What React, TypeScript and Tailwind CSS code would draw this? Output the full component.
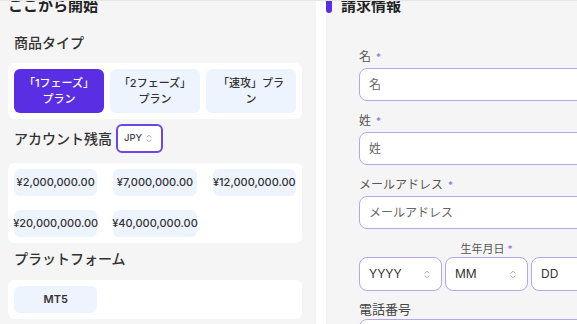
import React from "react";

const FONT = { fontFamily: 'Inter, "Noto Sans CJK JP", "Noto Sans", sans-serif' };

function Chevrons({ className = "" }: { className?: string }) {
  return (
    <svg width="6" height="9" viewBox="0 0 6 9" className={className} fill="none" stroke="#a3a3a3" strokeWidth="1" strokeLinecap="round" strokeLinejoin="round">
      <path d="M1 3.2 L3 1.2 L5 3.2" />
      <path d="M1 5.8 L3 7.8 L5 5.8" />
    </svg>
  );
}

function Label({ text, required = true }: { text: string; required?: boolean }) {
  return (
    <div className="text-[12px] leading-[16px] text-[#555] mb-[3px]">
      {text}
      {required && <span className="ml-[5px] text-[10px] text-[#8c6cf2]">*</span>}
    </div>
  );
}

function TextInput({ placeholder }: { placeholder: string }) {
  return (
    <input
      readOnly
      placeholder={placeholder}
      className="block w-full h-[33px] rounded-[8px] border border-[#b5a7ef] bg-white pl-[9px] text-[12px] text-[#333] placeholder:text-[#666] outline-none"
    />
  );
}

function DateSelect({ text }: { text: string }) {
  return (
    <div className="w-[83px] h-[34px] shrink-0 rounded-[8px] border border-[#b5a7ef] bg-white flex items-center justify-between pl-[9px] pr-[11px] text-[12px] text-[#333]">
      <span>{text}</span>
      <Chevrons />
    </div>
  );
}

export default function App() {
  const plans = [
    { label: "「1フェーズ」プラン", active: true },
    { label: "「2フェーズ」プラン", active: false },
    { label: "「速攻」プラン", active: false },
  ];
  const balances = ["¥2,000,000.00", "¥7,000,000.00", "¥12,000,000.00", "¥20,000,000.00", "¥40,000,000.00"];

  return (
    <div style={FONT} className="w-[577px] h-[324px] overflow-hidden bg-white border-t border-[#e6e6e6] flex gap-[10px]">
      {/* Left column */}
      <div className="w-[316px] shrink-0 h-full bg-[#f5f5f5] pl-2">
        <h2 className="-mt-[6px] text-[15px] leading-[22px] font-bold text-[#222]">ここから開始</h2>

        <div className="mt-[16px] pl-[6px] text-[14px] leading-[20px] font-medium text-[#333]">商品タイプ</div>
        <div className="mt-[10px] w-[294px] rounded-[6px] bg-white p-[6px] grid grid-cols-3 gap-[6px]">
          {plans.map((p) => (
            <div
              key={p.label}
              className={`h-[44px] rounded-[6px] px-[8px] flex items-center justify-center text-center text-[11px] leading-[16px] font-medium ${
                p.active ? "bg-[#5a2ee2] text-white" : "bg-[#eef4fe] text-[#333]"
              }`}
            >
              {p.label}
            </div>
          ))}
        </div>

        <div className="mt-[5px] pl-[6px] flex items-center gap-1">
          <span className="text-[14px] leading-[20px] font-medium text-[#333]">アカウント残高</span>
          <div className="w-[47px] h-[29px] rounded-[6px] border-2 border-[#6a47e6] bg-white flex items-center pl-[6px] gap-[4px]">
            <span className="text-[9.5px] font-medium text-[#444]">JPY</span>
            <Chevrons />
          </div>
        </div>

        <div className="mt-[10px] w-[294px] rounded-[6px] bg-white p-[6px] grid grid-cols-3 gap-x-4 gap-y-[14px]">
          {balances.map((b) => (
            <div key={b} className="h-[27px] rounded-[6px] bg-[#eef4fe] flex items-center justify-center whitespace-nowrap text-[11px] font-medium text-[#333]">
              {b}
            </div>
          ))}
        </div>

        <div className="mt-[6px] pl-[6px] text-[14px] leading-[20px] font-medium text-[#333]">プラットフォーム</div>
        <div className="mt-[11px] w-[294px] rounded-[6px] bg-white p-[6px] grid grid-cols-3 gap-x-4">
          <div className="h-[27px] rounded-[6px] bg-[#eef4fe] flex items-center justify-center text-[11px] font-semibold text-[#333]">MT5</div>
        </div>
      </div>

      {/* Right column */}
      <div className="w-[320px] shrink-0 h-full bg-[#f5f5f5]">
        <div className="-mt-[6px] flex items-start gap-[9px]">
          <div className="w-[6px] h-[18px] rounded-[3px] bg-[#5a2ee2]" />
          <h2 className="text-[15px] leading-[22px] font-bold text-[#222]">請求情報</h2>
        </div>

        <div className="pl-[33px]">
          <div className="mt-[32px]">
            <Label text="名" />
            <TextInput placeholder="名" />
          </div>
          <div className="mt-[12px]">
            <Label text="姓" />
            <TextInput placeholder="姓" />
          </div>
          <div className="mt-[12px]">
            <Label text="メールアドレス" />
            <TextInput placeholder="メールアドレス" />
          </div>
          <div className="mt-[12px] w-[255px]">
            <div className="text-center text-[11px] leading-[16px] text-[#555]">
              生年月日<span className="ml-[3px] text-[10px] text-[#8c6cf2]">*</span>
            </div>
            <div className="flex gap-[3px]">
              <DateSelect text="YYYY" />
              <DateSelect text="MM" />
              <DateSelect text="DD" />
            </div>
          </div>
          <div className="mt-[10px]">
            <div className="text-[13px] leading-[17px] text-[#444] mb-[1px]">電話番号</div>
            <TextInput placeholder="" />
          </div>
        </div>
      </div>
    </div>
  );
}
